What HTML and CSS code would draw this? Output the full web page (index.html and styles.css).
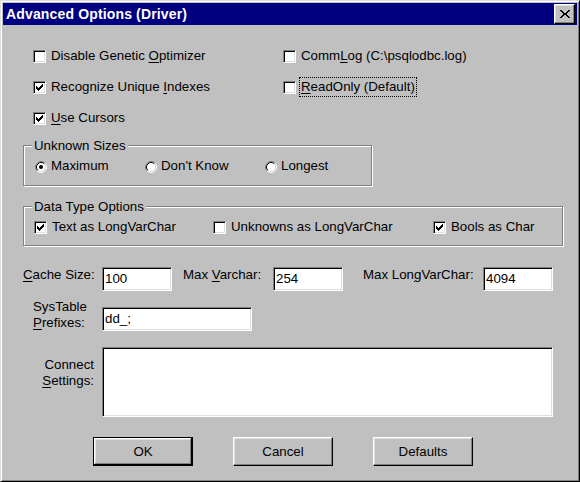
FILE: index.html
```html
<!DOCTYPE html>
<html>
<head>
<meta charset="utf-8">
<title>Advanced Options (Driver)</title>
<link rel="stylesheet" href="styles.css">
</head>
<body>
<div class="window">
  <div class="titlebar">
    <span class="title">Advanced Options (Driver)</span>
    <button class="close" aria-label="Close"><svg width="10" height="8" viewBox="0 0 10 8" shape-rendering="crispEdges"><path fill="#000" d="M0 0h2v1H0zM8 0h2v1H8zM1 1h2v1H1zM7 1h2v1H7zM2 2h2v1H2zM6 2h2v1H6zM3 3h4v2H3zM2 5h2v1H2zM6 5h2v1H6zM1 6h2v1H1zM7 6h2v1H7zM0 7h2v1H0zM8 7h2v1H8z"/></svg></button>
  </div>
  <div class="content">
    <div class="options">
      <div class="check"><span class="box"></span><span class="lbl">Disable Genetic <u>O</u>ptimizer</span></div>
      <div class="check"><span class="box"></span><span class="lbl">Comm<u>L</u>og (C:\psqlodbc.log)</span></div>
      <div class="check"><span class="box"><svg width="7" height="7" viewBox="0 0 7 7" shape-rendering="crispEdges"><path d="M0 2h1v3H0zM1 3h1v3H1zM2 4h1v3H2zM3 3h1v3H3zM4 2h1v3H4zM5 1h1v3H5zM6 0h1v3H6z"/></svg></span><span class="lbl">Recognize Unique <u>I</u>ndexes</span></div>
      <div class="check"><span class="box"></span><span class="lbl focus"><u>R</u>eadOnly (Default)</span></div>
      <div class="check"><span class="box"><svg width="7" height="7" viewBox="0 0 7 7" shape-rendering="crispEdges"><path d="M0 2h1v3H0zM1 3h1v3H1zM2 4h1v3H2zM3 3h1v3H3zM4 2h1v3H4zM5 1h1v3H5zM6 0h1v3H6z"/></svg></span><span class="lbl"><u>U</u>se Cursors</span></div>
    </div>

    <fieldset class="group sizes">
      <legend>Unknown Sizes</legend>
      <div class="row">
        <div class="radio w110"><svg class="rb" width="12" height="12" viewBox="0 0 12 12"><circle cx="6" cy="6" r="4.5" fill="#fff"/><path d="M2.11 9.89A5.5 5.5 0 0 1 9.89 2.11" stroke="#808080" fill="none"/><path d="M9.89 2.11A5.5 5.5 0 0 1 2.11 9.89" stroke="#fff" fill="none"/><path d="M2.82 9.18A4.5 4.5 0 0 1 9.18 2.82" stroke="#000" fill="none"/><path d="M9.18 2.82A4.5 4.5 0 0 1 2.82 9.18" stroke="#dfdfdf" fill="none"/><circle cx="6" cy="6" r="2" fill="#000"/></svg><span class="lbl">Maximum</span></div>
        <div class="radio w120"><svg class="rb" width="12" height="12" viewBox="0 0 12 12"><circle cx="6" cy="6" r="4.5" fill="#fff"/><path d="M2.11 9.89A5.5 5.5 0 0 1 9.89 2.11" stroke="#808080" fill="none"/><path d="M9.89 2.11A5.5 5.5 0 0 1 2.11 9.89" stroke="#fff" fill="none"/><path d="M2.82 9.18A4.5 4.5 0 0 1 9.18 2.82" stroke="#000" fill="none"/><path d="M9.18 2.82A4.5 4.5 0 0 1 2.82 9.18" stroke="#dfdfdf" fill="none"/></svg><span class="lbl">Don't Know</span></div>
        <div class="radio"><svg class="rb" width="12" height="12" viewBox="0 0 12 12"><circle cx="6" cy="6" r="4.5" fill="#fff"/><path d="M2.11 9.89A5.5 5.5 0 0 1 9.89 2.11" stroke="#808080" fill="none"/><path d="M9.89 2.11A5.5 5.5 0 0 1 2.11 9.89" stroke="#fff" fill="none"/><path d="M2.82 9.18A4.5 4.5 0 0 1 9.18 2.82" stroke="#000" fill="none"/><path d="M9.18 2.82A4.5 4.5 0 0 1 2.82 9.18" stroke="#dfdfdf" fill="none"/></svg><span class="lbl">Longest</span></div>
      </div>
    </fieldset>

    <fieldset class="group types">
      <legend>Data Type Options</legend>
      <div class="row">
        <div class="check w179"><span class="box"><svg width="7" height="7" viewBox="0 0 7 7" shape-rendering="crispEdges"><path d="M0 2h1v3H0zM1 3h1v3H1zM2 4h1v3H2zM3 3h1v3H3zM4 2h1v3H4zM5 1h1v3H5zM6 0h1v3H6z"/></svg></span><span class="lbl">Text as LongVarChar</span></div>
        <div class="check w220"><span class="box"></span><span class="lbl">Unknowns as LongVarChar</span></div>
        <div class="check"><span class="box"><svg width="7" height="7" viewBox="0 0 7 7" shape-rendering="crispEdges"><path d="M0 2h1v3H0zM1 3h1v3H1zM2 4h1v3H2zM3 3h1v3H3zM4 2h1v3H4zM5 1h1v3H5zM6 0h1v3H6z"/></svg></span><span class="lbl">Bools as Char</span></div>
      </div>
    </fieldset>

    <div class="fields">
      <label class="flabel l1"><u>C</u>ache Size:</label>
      <input class="edit" type="text" value="100">
      <label class="flabel l2">Max <u>V</u>archar:</label>
      <input class="edit" type="text" value="254">
      <label class="flabel l3">Max Lon<u>g</u>VarChar:</label>
      <input class="edit" type="text" value="4094">
    </div>

    <div class="pair prefix">
      <label class="plabel">SysTable<br><u>P</u>refixes:</label>
      <input class="edit wide" type="text" value="dd_;">
    </div>

    <div class="pair connect">
      <label class="plabel right">Connect<br><u>S</u>ettings:</label>
      <textarea class="memo"></textarea>
    </div>

    <div class="buttons">
      <button class="btn default">OK</button>
      <button class="btn">Cancel</button>
      <button class="btn">Defaults</button>
    </div>
  </div>
</div>
</body>
</html>
```

FILE: styles.css
```css
* { box-sizing: border-box; }
html, body { margin: 0; padding: 0; }
body {
  background: #c0c0c0;
  font-family: "Liberation Sans", Arial, sans-serif;
  font-size: 13.3px;
  line-height: 16px;
  color: #000;
}
u { text-decoration: underline; text-underline-offset: 2px; }

.window {
  width: 580px;
  height: 482px;
  background: #c0c0c0;
  border: 1px solid;
  border-color: #dfdfdf #000 #000 #dfdfdf;
  box-shadow: inset 1px 1px #fff, inset -1px -1px #808080;
  padding: 2px;
  display: flex;
  flex-direction: column;
}

.titlebar {
  height: 22px;
  background: #000080;
  display: flex;
  align-items: flex-start;
  padding-left: 3px;
  flex: none;
}
.title {
  color: #fff;
  font-weight: bold;
  font-size: 14px;
  letter-spacing: 0.15px;
  line-height: 22px;
  white-space: nowrap;
}
.close {
  margin: 1px 2px 0 auto;
  width: 21px;
  height: 20px;
  padding: 0;
  background: #c0c0c0;
  border: 1px solid;
  border-color: #fff #000 #000 #fff;
  box-shadow: inset -1px -1px #808080, inset 1px 1px #dfdfdf;
  display: flex;
  align-items: center;
  justify-content: center;
}
.close svg { display: block; }

.content { flex: 1; display: flex; flex-direction: column; }

/* top options */
.options {
  margin-top: 21px;
  padding-left: 30px;
  display: grid;
  grid-template-columns: 250px auto;
  row-gap: 11px;
}

.check, .radio { display: flex; align-items: flex-start; white-space: nowrap; }
.box {
  flex: none;
  width: 13px;
  height: 13px;
  margin-top: 4px;
  margin-right: 3px;
  background: #fff;
  border: 1px solid;
  border-color: #808080 #fff #fff #808080;
  box-shadow: inset 1px 1px #000, inset -1px -1px #dfdfdf;
  display: flex;
  align-items: center;
  justify-content: center;
}
.box svg { display: block; }
.rb { flex: none; display: block; margin-top: 5px; margin-right: 2px; }
.lbl {
  border: 1px dotted transparent;
  padding: 1px;
  line-height: 16px;
}
.lbl.focus { border-color: #000; }

/* group boxes */
.group {
  margin: 9px 0 0 20px;
  width: 349px;
  min-inline-size: 0;
  border: 1px solid #808080;
  box-shadow: inset 1px 1px #fff, 1px 1px #fff;
  padding: 2px 0 9px 11px;
}
.group legend {
  margin-left: -3px;
  padding: 1px 2px 0;
  line-height: 16px;
  background: #c0c0c0;
}
.group .row { display: flex; }
.types {
  margin-top: 12px;
  width: 540px;
  padding: 2px 0 8px 10px;
}
.types legend { margin-left: -2px; }
.w110 { width: 110px; }
.w120 { width: 120px; }
.w179 { width: 179px; }
.w220 { width: 220px; }

/* edit fields */
.fields {
  margin: 21px 0 0 20px;
  display: flex;
  align-items: flex-start;
}
.flabel { flex: none; line-height: 16px; white-space: nowrap; }
.l1 { width: 79px; }
.l2 { width: 90px; margin-left: 11px; }
.l3 { width: 120px; margin-left: 20px; }

.edit {
  flex: none;
  width: 70px;
  height: 24px;
  margin: 0;
  padding: 2px 2px 4px 2px;
  font: inherit;
  line-height: 16px;
  color: #000;
  background: #fff;
  border: 1px solid;
  border-color: #808080 #fff #fff #808080;
  box-shadow: inset 1px 1px #000, inset -1px -1px #dfdfdf;
  outline: none;
}
.edit.wide { width: 150px; margin-top: 8px; }

.pair {
  margin-left: 30px;
  display: flex;
  align-items: flex-start;
}
.prefix { margin-top: 8px; }
.connect { margin-top: 16px; }
.plabel { flex: none; width: 61px; margin-right: 8px; line-height: 16px; white-space: nowrap; }
.plabel.right { text-align: right; margin-top: 10px; }

.memo {
  flex: none;
  width: 451px;
  height: 70px;
  margin: 0;
  padding: 2px;
  resize: none;
  font: inherit;
  background: #fff;
  border: 1px solid;
  border-color: #808080 #fff #fff #808080;
  box-shadow: inset 1px 1px #000, inset -1px -1px #dfdfdf;
  outline: none;
}

/* buttons */
.buttons {
  margin: 20px 0 0 90px;
  display: flex;
  gap: 40px;
}
.btn {
  width: 100px;
  height: 29px;
  margin: 0;
  padding: 0;
  font: inherit;
  line-height: 16px;
  color: #000;
  background: #c0c0c0;
  border: 1px solid;
  border-color: #fff #000 #000 #fff;
  box-shadow: inset -1px -1px #808080, inset 1px 1px #dfdfdf;
}
.btn.default {
  border-color: #000;
  box-shadow: inset -1px -1px #000, inset 1px 1px #fff, inset -2px -2px #808080, inset 2px 2px #dfdfdf;
}
```
